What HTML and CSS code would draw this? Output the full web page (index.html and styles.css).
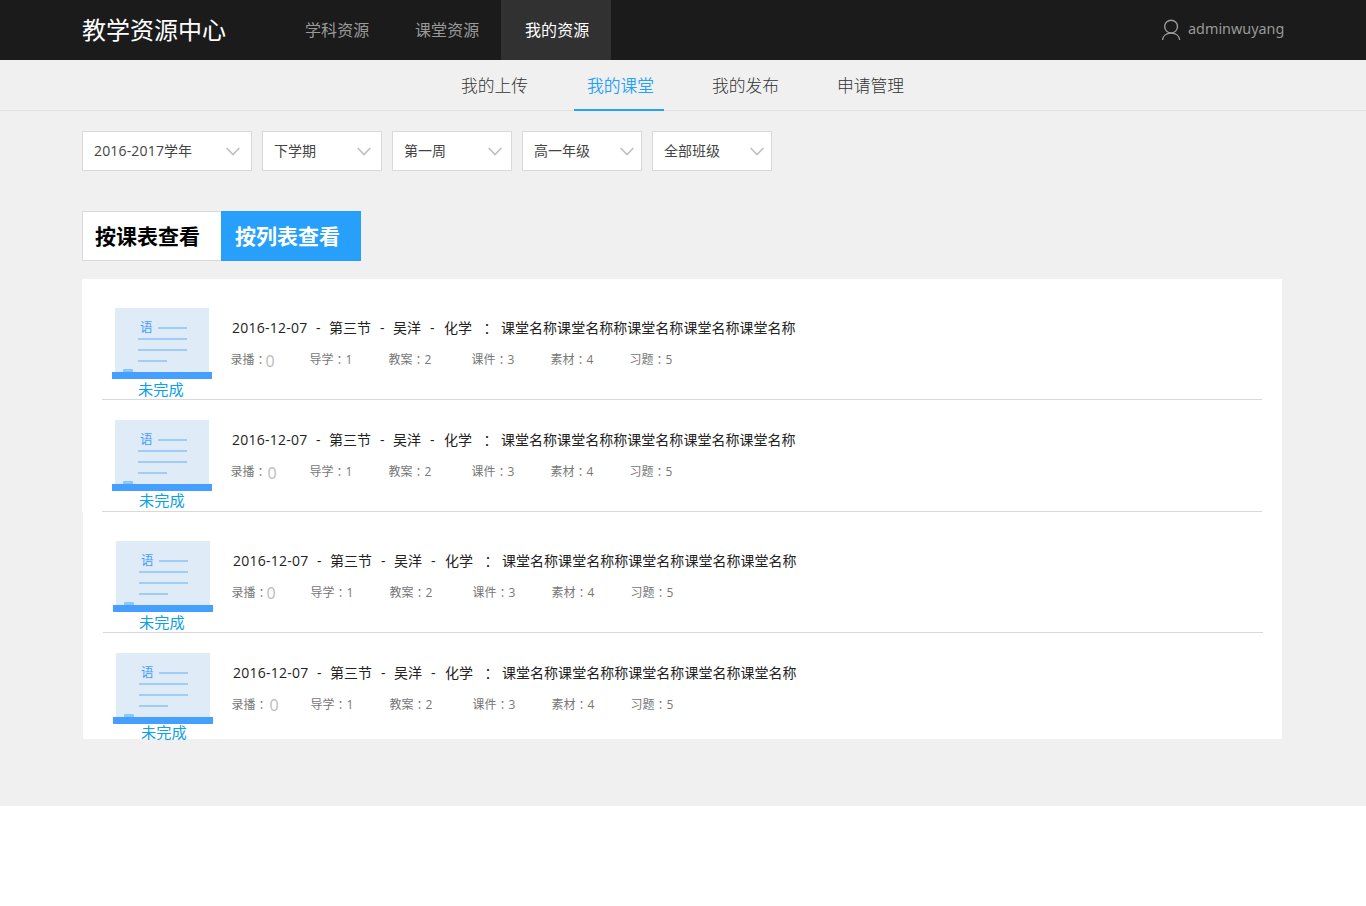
FILE: index.html
```
<!DOCTYPE html>
<html lang="zh-CN">
<head>
<meta charset="utf-8">
<title>教学资源中心</title>
<link rel="stylesheet" href="styles.css">
</head>
<body>
<div class="page">
  <header class="topbar">
    <h1 class="brand">教学资源中心</h1>
    <nav class="mainnav">
      <a>学科资源</a>
      <a>课堂资源</a>
      <a class="active">我的资源</a>
    </nav>
    <div class="user">
      <svg width="20" height="22" viewBox="0 0 20 22" fill="none" stroke="#999" stroke-width="1.4"><circle cx="10.1" cy="7.6" r="6.4"/><path d="M1.500 21C2 16.800 5.500 14 10.100 14S18.200 16.800 18.700 21"/></svg>
      <span>adminwuyang</span>
    </div>
  </header>
  <nav class="subnav">
    <a>我的上传</a>
    <a class="active">我的课堂</a>
    <a>我的发布</a>
    <a>申请管理</a>
  </nav>
  <main class="content">
    <div class="filters">
      <div class="select year"><span><span class="digits">2016-2017</span>学年</span><svg class="chevron" viewBox="0 0 14 9"><path d="M.7 1 7 7.500 13.300 1"/></svg></div>
      <div class="select"><span>下学期</span><svg class="chevron" viewBox="0 0 14 9"><path d="M.7 1 7 7.500 13.300 1"/></svg></div>
      <div class="select"><span>第一周</span><svg class="chevron near" viewBox="0 0 14 9"><path d="M.7 1 7 7.500 13.300 1"/></svg></div>
      <div class="select"><span>高一年级</span><svg class="chevron nearer" viewBox="0 0 14 9"><path d="M.7 1 7 7.500 13.300 1"/></svg></div>
      <div class="select"><span>全部班级</span><svg class="chevron nearer" viewBox="0 0 14 9"><path d="M.7 1 7 7.500 13.300 1"/></svg></div>
    </div>
    <div class="views">
      <button class="view">按课表查看</button>
      <button class="view on">按列表查看</button>
    </div>
    <div class="list" id="list"></div>
  </main>
</div>
<script src="app.js"></script>
</body>
</html>
```

FILE: styles.css
```
* { box-sizing: border-box; }
body { margin: 0; background: #fff; font-family: "Open Sans", "Noto Sans CJK SC", sans-serif; }
.page { height: 806px; background: #f0f0f0; }

.topbar { display: flex; height: 60px; padding: 0 82px; background: #1b1b1b; color: #999; }
.brand { margin: 0; width: 201px; font-size: 24px; line-height: 57px; font-weight: 400; color: #fff; font-family: "Noto Sans CJK SC", sans-serif; }
.mainnav { display: flex; font-family: "Noto Sans CJK SC", sans-serif; font-size: 16px; line-height: 58px; letter-spacing: .1px; }
.mainnav a { width: 110px; padding-left: 22px; }
.mainnav a + a { width: 108px; }
.mainnav .active, .mainnav a.active { width: 110px; padding-left: 24px; background: #313131; color: #fff; }
.user { display: flex; gap: 7px; margin-left: auto; margin-right: -1px; line-height: 58px; }
.user svg { margin-top: 19px; }
.user span { width: 97px; font-family: "Noto Sans", sans-serif; font-size: 14.4px; }

.subnav { display: flex; gap: 36px; height: 51px; padding-left: 448px; border-bottom: 1px solid #e2e2e2; font-family: "Noto Sans CJK SC", sans-serif; font-weight: 300; font-size: 16.8px; line-height: 51px; color: #333; }
.subnav a { width: 90px; height: 51px; padding-left: 13px; white-space: nowrap; }
.subnav .active { color: #26a0fa; border-bottom: 2px solid #26a0fa; font-weight: 350; }
.subnav .active ~ a { margin-left: -1px; }

.content { width: 1200px; margin-left: 82px; padding-top: 20px; }
.filters { display: flex; gap: 10px; }
.select { display: flex; align-items: center; justify-content: space-between; width: 120px; height: 40px; padding: 0 10px 0 11px; border: 1px solid #d9d9d9; background: #fff; color: #444; font-size: 14px; line-height: 20px; }
.select.year { width: 170px; }
.digits { letter-spacing: .17px; }
.chevron { width: 14px; height: 9px; fill: none; stroke: #c0c0c0; stroke-width: 1.7; }
.year .chevron { margin-right: 1px; }
.near { margin-right: -1px; }
.nearer { margin-right: -3px; }

.views { display: flex; margin-top: 40px; }
.view { width: 139px; height: 50px; padding: 0 0 2px 12px; border: 1px solid #d9d9d9; border-right: 0; background: #fff; color: #000; font: 700 21px/46px "Noto Sans CJK SC", sans-serif; text-align: left; }
.view.on { width: 140px; padding-left: 14px; border: 0; background: #26a0fa; color: #fff; }

.list { margin-top: 18px; height: 460px; }
.lesson { display: flex; height: 112px; padding: 20px 0 0 30px; background: linear-gradient(#d9d9d9, #d9d9d9) 20px 100% / 1160px 1px no-repeat #fff; }
.lesson.spaced { height: 121px; padding-top: 29px; }
.lesson.shifted { margin-left: 1px; }
.lesson:last-child { height: 106px; background: #fff; }
.thumb { width: 100px; height: 71px; }
.board { display: block; width: 100px; height: 71px; }
.board text { font-family: "Noto Sans CJK SC", sans-serif; font-size: 12.5px; fill: #459fff; }
.status { font-family: "Noto Sans CJK SC", sans-serif; font-size: 15.2px; line-height: 19px; height: 19px; color: #0aa0ea; white-space: nowrap; }
.info { padding-left: 19px; }
.title { display: grid; grid-template-columns: 85px 13px 51px 13px 37px 14px 36px 21px auto; height: 20px; margin-top: 10px; font-size: 14px; line-height: 20px; color: #222; white-space: nowrap; }
.title span:last-child { letter-spacing: .03px; }
.date { padding-left: 1px; letter-spacing: .25px; }
.colon { font-family: "Noto Sans CJK TC", sans-serif; }
.meta { display: grid; grid-template-columns: 79px 79px 83px 79px 79px 60px; margin: 12px 0 0 -.5px; height: 20px; font-size: 12px; line-height: 20px; color: #777; white-space: nowrap; }
.meta > span { display: flex; }
.rec { font-size: 16px; line-height: 22px; color: #bbb; }
```

FILE: app.js
```
// Per-row offsets keep the status and recording count where each lesson places them.
const lessons = [
  { spaced: true, shifted: false, statusX: 26, statusY: 0, recX: -1, recY: 0 },
  { spaced: false, shifted: false, statusX: 27, statusY: -1, recX: 1, recY: 0 },
  { spaced: true, shifted: true, statusX: 26, statusY: 0, recX: -1, recY: -1 },
  { spaced: false, shifted: true, statusX: 28, statusY: -2, recX: 2, recY: -1 }
];
const counts = [['导学', 1], ['教案', 2], ['课件', 3], ['素材', 4], ['习题', 5]];
const board = `<svg class="board" viewBox="0 0 100 71">
  <path fill="#dfebf7" d="M3 0h94v64H3z"/>
  <text x="28" y="24">语</text>
  <path fill="#9fcdf9" d="M46 19h29v2H46zM26 30h49v2H26zM26 41h49v2H26zM26 52h29v2H26z"/>
  <path fill="#90c5fc" d="M11 64v-2q0-1 1-1h8q1 0 1 1v2z"/>
  <path fill="#459fff" d="M0 64h100v7H0z"/>
</svg>`;
document.getElementById('list').innerHTML = lessons.map(l => `
<article class="lesson${l.spaced ? ' spaced' : ''}${l.shifted ? ' shifted' : ''}">
  <div class="thumb">${board}<div class="status" style="margin:${l.statusY}px 0 0 ${l.statusX}px">未完成</div></div>
  <div class="info">
    <div class="title"><span class="date">2016-12-07</span><span>-</span><span>第三节</span><span>-</span><span>吴洋</span><span>-</span><span>化学</span><span class="colon">：</span><span>课堂名称课堂名称称课堂名称课堂名称课堂名称</span></div>
    <div class="meta"><span>录播<span class="colon">：</span><span class="rec" style="margin:${l.recY}px 0 0 ${l.recX}px">0</span></span>${counts.map(([k, n]) => `<span>${k}<span class="colon">：</span>${n}</span>`).join('')}</div>
  </div>
</article>`).join('');
```
